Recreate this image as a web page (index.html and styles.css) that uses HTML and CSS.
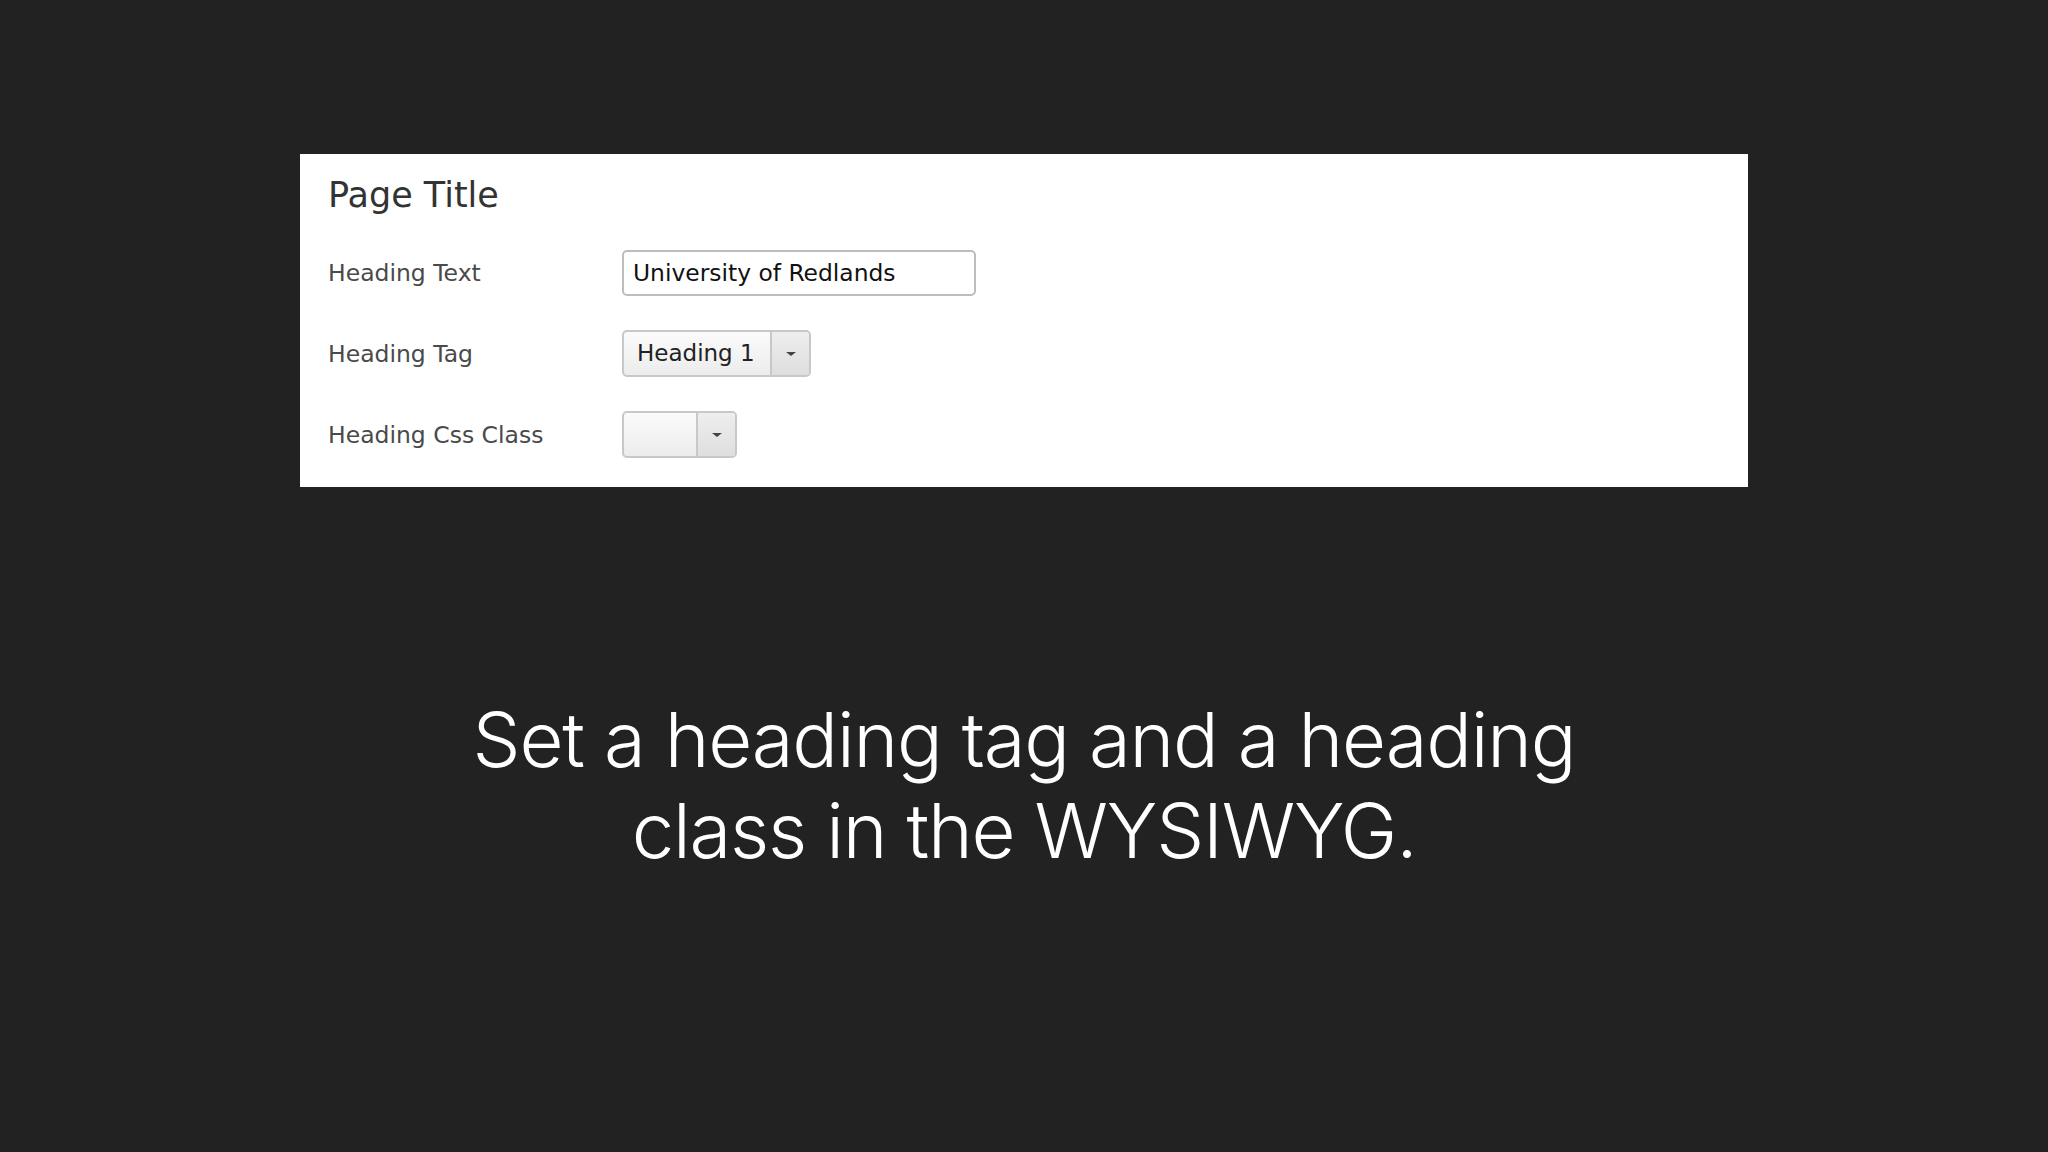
FILE: index.html
```html
<!DOCTYPE html>
<html>
<head>
<meta charset="utf-8">
<link rel="stylesheet" href="styles.css">
</head>
<body>
<div class="stage">
  <div class="panel">
    <div class="title">Page Title</div>
    <div class="form">
      <div class="label">Heading Text</div>
      <div class="field"><div class="input">University of Redlands</div></div>
      <div class="label">Heading Tag</div>
      <div class="field">
        <div class="select sel-tag">
          <span class="sel-text">Heading 1</span>
          <span class="sel-btn"><svg width="12" height="6" viewBox="0 0 12 6"><path d="M1 1 L11 1 L6 5 Z" fill="#444"/></svg></span>
        </div>
      </div>
      <div class="label">Heading Css Class</div>
      <div class="field">
        <div class="select sel-class">
          <span class="sel-text"></span>
          <span class="sel-btn"><svg width="12" height="6" viewBox="0 0 12 6"><path d="M1 1 L11 1 L6 5 Z" fill="#444"/></svg></span>
        </div>
      </div>
    </div>
  </div>
  <div class="caption">Set a heading tag and a heading<br>class in the WYSIWYG.</div>
</div>
</body>
</html>
```
FILE: styles.css
```css
html, body {
  margin: 0;
  padding: 0;
}
body {
  width: 2048px;
  height: 1152px;
  overflow: hidden;
  background: #222222;
}
.stage {
  padding-top: 154px;
  display: flex;
  flex-direction: column;
  align-items: center;
}
.panel {
  width: 1448px;
  height: 333px;
  box-sizing: border-box;
  background: #fff;
  padding: 20px 0 0 28px;
  font-family: "DejaVu Sans", Verdana, sans-serif;
}
.title {
  font-size: 35px;
  line-height: 42px;
  color: #333;
}
.form {
  margin-top: 33px;
  display: grid;
  grid-template-columns: 294px auto;
  grid-auto-rows: 47px;
  row-gap: 34px;
  align-items: center;
}
.label {
  font-size: 23.5px;
  color: #4a4a4a;
}
.field {
  display: flex;
  align-items: center;
  height: 47px;
}
.input {
  width: 354px;
  height: 46px;
  box-sizing: border-box;
  border: 2px solid #bdbdbd;
  border-radius: 5px;
  padding-left: 9px;
  font-size: 23.4px;
  line-height: 42px;
  color: #111;
}
.select {
  display: flex;
  height: 47px;
  box-sizing: border-box;
  border: 2px solid #c8c8c8;
  border-radius: 5px;
  background: linear-gradient(#fbfbfb, #ececec);
  overflow: hidden;
}
.sel-tag { width: 189px; }
.sel-class { width: 115px; }
.sel-text {
  flex: 1;
  padding-left: 13px;
  font-size: 23px;
  line-height: 43px;
  color: #222;
}
.sel-btn {
  width: 37px;
  border-left: 2px solid #c8c8c8;
  background: linear-gradient(#eeeeee, #dedede);
  display: flex;
  align-items: center;
  justify-content: center;
}
.caption {
  margin-top: 207px;
  font-family: Inter, "Open Sans", sans-serif;
  font-weight: 300;
  font-size: 76px;
  letter-spacing: -1.2px;
  line-height: 91px;
  color: #fff;
  text-align: center;
}
```
